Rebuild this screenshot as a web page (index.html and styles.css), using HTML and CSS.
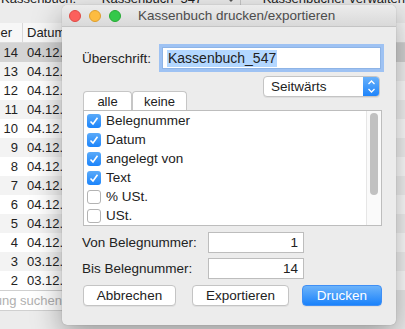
FILE: index.html
```html
<!DOCTYPE html>
<html lang="de">
<head>
	<meta charset="UTF-8">
	<title>Kassenbuch drucken/exportieren</title>
	<link rel="stylesheet" href="styles.css">
</head>
<body>
	<div id="app">
		<div class="toolbar">
			<span class="tb-label">Kassenbuch:</span>
			<span class="tb-popup">Kassenbuch_547
				<svg class="tb-chev" width="10" height="8" viewBox="0 0 10 8"><path d="M1 2 L5 6 L9 2" fill="none" stroke="#555" stroke-width="1.3"/></svg>
			</span>
			<span class="tb-title">Kassenbücher verwalten</span>
		</div>
		<div class="table">
			<div class="thead"><span class="c-nr">Belegnummer</span><span class="c-date">Datum</span></div>
			<div class="row sel"><span class="c-nr">14</span><span class="c-date">04.12.2014</span></div>
			<div class="row"><span class="c-nr">13</span><span class="c-date">04.12.2014</span></div>
			<div class="row"><span class="c-nr">12</span><span class="c-date">04.12.2014</span></div>
			<div class="row"><span class="c-nr">11</span><span class="c-date">04.12.2014</span></div>
			<div class="row"><span class="c-nr">10</span><span class="c-date">04.12.2014</span></div>
			<div class="row"><span class="c-nr">9</span><span class="c-date">04.12.2014</span></div>
			<div class="row"><span class="c-nr">8</span><span class="c-date">04.12.2014</span></div>
			<div class="row"><span class="c-nr">7</span><span class="c-date">04.12.2014</span></div>
			<div class="row"><span class="c-nr">6</span><span class="c-date">04.12.2014</span></div>
			<div class="row"><span class="c-nr">5</span><span class="c-date">04.12.2014</span></div>
			<div class="row"><span class="c-nr">4</span><span class="c-date">04.12.2014</span></div>
			<div class="row"><span class="c-nr">3</span><span class="c-date">03.12.2014</span></div>
			<div class="row"><span class="c-nr">2</span><span class="c-date">03.12.2014</span></div>
		</div>
		<div class="search"><span class="search-ph">Buchung suchen</span></div>
	</div>

	<div id="dialog">
		<div class="titlebar">
			<span class="light red"></span><span class="light yellow"></span><span class="light green"></span>
			<span class="title">Kassenbuch drucken/exportieren</span>
		</div>
		<div class="content">
			<div class="head-row">
				<label class="lbl-head">Überschrift:</label>
				<div class="input focus"><span class="selected">Kassenbuch_547</span></div>
			</div>
			<div class="tools-row">
				<div class="seg"><button class="seg-btn alle">alle</button><button class="seg-btn keine">keine</button></div>
				<div class="popup">
					<span class="popup-text">Seitwärts</span>
					<span class="stepper">
						<svg width="17" height="21" viewBox="0 0 17 21"><path d="M5.5 8 L8.5 5 L11.5 8" fill="none" stroke="#fff" stroke-width="1.3"/><path d="M5.5 13 L8.5 16 L11.5 13" fill="none" stroke="#fff" stroke-width="1.3"/></svg>
					</span>
				</div>
			</div>
			<div class="listbox">
				<ul class="items">
					<li><span class="cb on"><svg width="14" height="14" viewBox="0 0 14 14"><path d="M3.5 7.5 L6 10 L10.5 3.8" fill="none" stroke="#fff" stroke-width="1.6"/></svg></span>Belegnummer</li>
					<li><span class="cb on"><svg width="14" height="14" viewBox="0 0 14 14"><path d="M3.5 7.5 L6 10 L10.5 3.8" fill="none" stroke="#fff" stroke-width="1.6"/></svg></span>Datum</li>
					<li><span class="cb on"><svg width="14" height="14" viewBox="0 0 14 14"><path d="M3.5 7.5 L6 10 L10.5 3.8" fill="none" stroke="#fff" stroke-width="1.6"/></svg></span>angelegt von</li>
					<li><span class="cb on"><svg width="14" height="14" viewBox="0 0 14 14"><path d="M3.5 7.5 L6 10 L10.5 3.8" fill="none" stroke="#fff" stroke-width="1.6"/></svg></span>Text</li>
					<li><span class="cb"></span>% USt.</li>
					<li><span class="cb"></span>USt.</li>
				</ul>
				<div class="scroller"><div class="thumb"></div></div>
			</div>
			<div class="range-row first"><label class="lbl-range">Von Belegnummer:</label><div class="num">1</div></div>
			<div class="range-row"><label class="lbl-range">Bis Belegnummer:</label><div class="num">14</div></div>
			<div class="buttons">
				<button class="btn cancel">Abbrechen</button>
				<button class="btn export">Exportieren</button>
				<button class="btn default">Drucken</button>
			</div>
		</div>
	</div>
</body>
</html>
```

FILE: styles.css
```css
*{padding:0;margin:0;box-sizing:border-box;}
body{width:405px;height:329px;overflow:hidden;background:#ececec;font-family:"Liberation Sans",Arial,sans-serif;font-size:13px;color:#222;position:relative;}

/* background window */
#app{width:405px;height:329px;}
.toolbar{display:flex;align-items:center;height:20px;margin-top:-11px;line-height:20px;white-space:nowrap;}
.tb-label{width:100px;padding-left:1px;}
.tb-popup{display:flex;align-items:center;width:156px;padding-left:8px;border-right:1px solid #c8c8c8;}
.tb-chev{margin-left:auto;margin-right:4px;}
.tb-title{padding-left:22px;}
.table{margin-top:14px;background:#fff;}
.thead,.row{display:flex;white-space:nowrap;}
.thead{height:20px;line-height:20px;background:#f7f7f7;border-bottom:1px solid #dcdcdc;}
.row{height:19px;line-height:19px;}
.row:nth-child(odd){background:#f3f3f3;}
.row.sel{background:#d4d4d4;}
.c-nr{display:flex;justify-content:flex-end;overflow:hidden;width:23px;padding-right:5px;}
.thead .c-nr{padding-right:10px;border-right:1px solid #d8d8d8;}
.c-date{padding-left:4px;}
.search{height:21px;margin-top:0;border-top:1px solid #d0d0d0;border-bottom:1px solid #d0d0d0;background:#fff;display:flex;justify-content:flex-end;overflow:hidden;width:70px;padding-right:8px;line-height:20px;}
.search-ph{color:#b0b0b0;white-space:nowrap;}

/* dialog */
#dialog{position:absolute;left:62px;top:5px;width:334px;height:320px;background:#ececec;border-radius:5px;box-shadow:0 0 1px rgba(0,0,0,.35),0 10px 30px rgba(0,0,0,.35);}
.titlebar{display:flex;align-items:center;height:22px;padding-left:7px;border-bottom:1px solid #c4c4c4;border-radius:5px 5px 0 0;background:linear-gradient(#ececec,#d9d9d9);}
.light{width:12px;height:12px;border-radius:50%;margin-right:8px;}
.red{background:#fc605c;border:1px solid #de4a45;}
.yellow{background:#fdbc40;border:1px solid #dd9e2d;}
.green{background:#34c84a;border:1px solid #27aa35;}
.title{margin-left:9px;color:#4c4c4c;font-size:13.5px;}
.content{padding:0 14px 0 20px;}

.head-row{display:flex;align-items:center;margin-top:20px;height:22px;}
.lbl-head{width:80px;font-size:13.5px;}
.input{width:219px;height:22px;background:#fff;border:1px solid #8eb4e6;padding:2px 4px;}
.input.focus{box-shadow:0 0 0 3px #9ec2f3;}
.selected{background:#b3d7ff;font-size:14px;line-height:17px;display:inline-block;padding:0 1px;}

.tools-row{display:flex;justify-content:space-between;height:34px;margin-top:7px;}
.seg{display:flex;align-self:flex-end;margin-left:1px;}
.seg-btn{height:19px;font:13px "Liberation Sans",Arial,sans-serif;color:#222;background:#fff;border:1px solid #c6c6c6;border-bottom:0;border-radius:4px 4px 0 0;}
.alle{width:49px;}
.keine{width:55px;}
.popup{display:flex;align-items:center;width:117px;height:21px;margin-right:2px;background:#fff;border:1px solid #c4c4c4;border-radius:4px;box-shadow:0 1px 0 rgba(0,0,0,.06);overflow:hidden;}
.popup-text{flex:1;padding-left:7px;font-size:13.5px;}
.stepper{width:17px;height:21px;margin-top:-1px;margin-right:-1px;border-radius:0 4px 4px 0;background:linear-gradient(#6cb3fa,#1a82fb);}
.stepper svg{display:block;}

.listbox{display:flex;width:299px;height:116px;margin-left:1px;background:#fff;border:1px solid #bdbdbd;}
.items{flex:1;list-style:none;padding-top:0;}
.items li{display:flex;align-items:center;height:19px;padding-left:3px;font-size:13.5px;}
.cb{width:14px;height:14px;margin-right:5px;border-radius:3px;background:#fff;border:1px solid #b3b3b3;}
.cb.on{border:0;background:linear-gradient(#5aaaf9,#1b84fb);}
.cb svg{display:block;}
.scroller{width:15px;background:#fafafa;border-left:1px solid #e6e6e6;padding:2px 3px 0 3px;}
.thumb{width:8px;height:82px;border-radius:4px;background:#c1c1c1;}

.range-row{display:flex;align-items:center;margin-top:5px;height:21px;}
.range-row.first{margin-top:6px;}
.lbl-range{width:126px;font-size:13.5px;}
.num{width:96px;height:21px;background:#fff;border:1px solid #bdbdbd;text-align:right;padding-right:5px;line-height:20px;font-size:13.5px;}

.buttons{display:flex;margin-top:6px;margin-left:1px;}
.btn{height:21px;font:13.5px "Liberation Sans",Arial,sans-serif;color:#222;background:#fff;border:1px solid #c4c4c4;border-radius:4px;box-shadow:0 1px 0 rgba(0,0,0,.05);}
.cancel{width:93px;}
.export{width:97px;margin-left:16px;}
.default{width:80px;margin-left:13px;color:#fff;border-color:#3f8ff5;background:linear-gradient(#6cb3fa,#1a82fb);}
```
